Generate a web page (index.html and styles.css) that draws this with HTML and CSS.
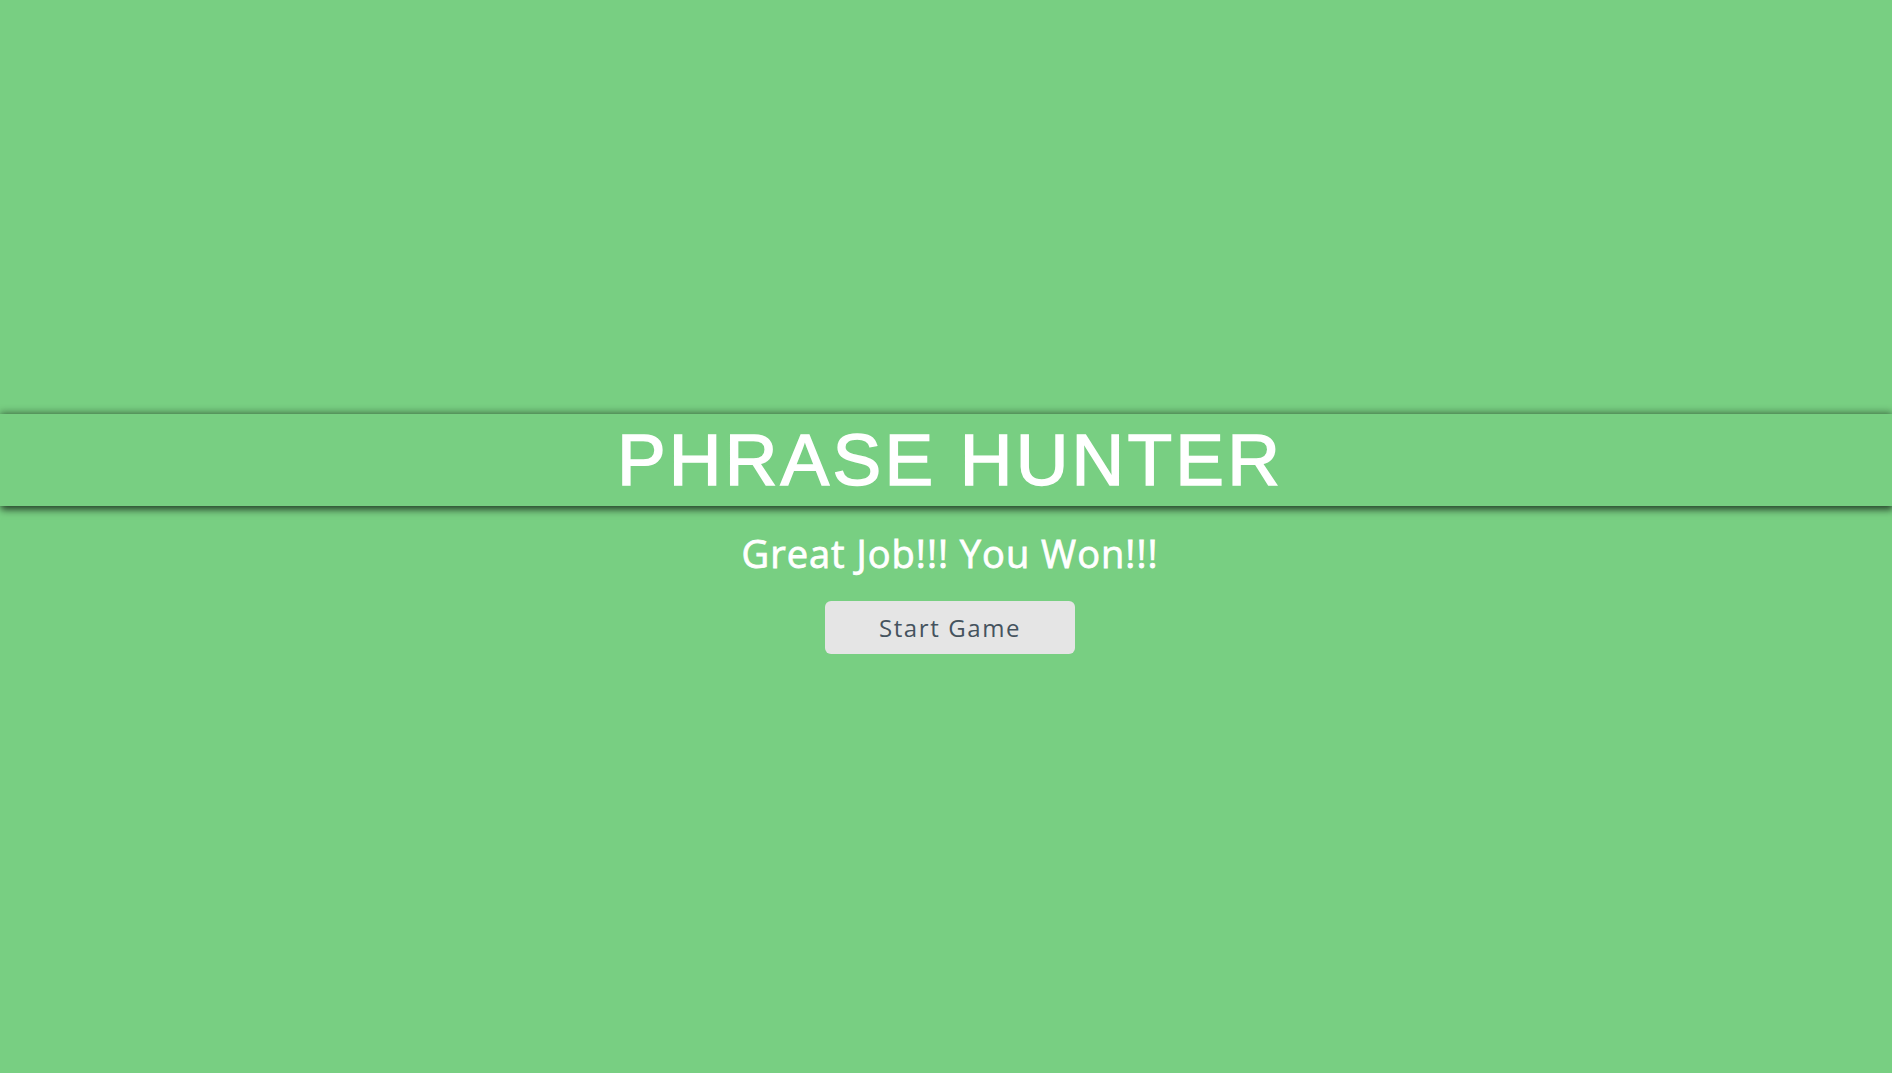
FILE: index.html
```html
<!DOCTYPE html>
<html lang="en">
<head>
<meta charset="utf-8">
<title>Phrase Hunter</title>
<link rel="stylesheet" href="styles.css">
</head>
<body>
<div class="overlay win">
  <div class="header">
    <h1 class="title">PHRASE HUNTER</h1>
  </div>
  <h2 class="message">Great Job!!! You Won!!!</h2>
  <button class="btn-reset">Start Game</button>
</div>
</body>
</html>
```
FILE: styles.css
```css
html, body {
  margin: 0;
  padding: 0;
  height: 100%;
}
body {
  background: #78cf82;
  font-family: "Open Sans", "Liberation Sans", sans-serif;
  overflow: hidden;
}
.overlay {
  display: flex;
  flex-direction: column;
  align-items: center;
  padding: 414px 0 0 8px;
  height: 100%;
  box-sizing: border-box;
}
.header {
  align-self: stretch;
  margin-left: -8px;
  padding-left: 8px;
  height: 92px;
  display: flex;
  align-items: center;
  justify-content: center;
  background: #78cf82;
  box-shadow: 1px 4px 7px rgba(0, 0, 0, 0.6), 0 -2px 7px rgba(0, 0, 0, 0.35);
}
.title {
  margin: 0;
  font-family: "Liberation Sans", Arial, sans-serif;
  font-weight: 400;
  font-size: 73px;
  line-height: 92px;
  letter-spacing: 3.2px;
  color: #fff;
  -webkit-text-stroke: 1.5px #fff;
}
.message {
  margin: 28px 0 0;
  font-size: 38px;
  line-height: 1;
  font-weight: 500;
  color: #fff;
  letter-spacing: 1px;
  -webkit-text-stroke: 0.8px #fff;
}
.btn-reset {
  margin-top: 29px;
  width: 250px;
  height: 53px;
  border: none;
  border-radius: 6px;
  background: #e5e5e5;
  color: #45535e;
  font-family: "Open Sans", "Liberation Sans", sans-serif;
  font-size: 24px;
  letter-spacing: 1.6px;
  padding: 0;
}
```
